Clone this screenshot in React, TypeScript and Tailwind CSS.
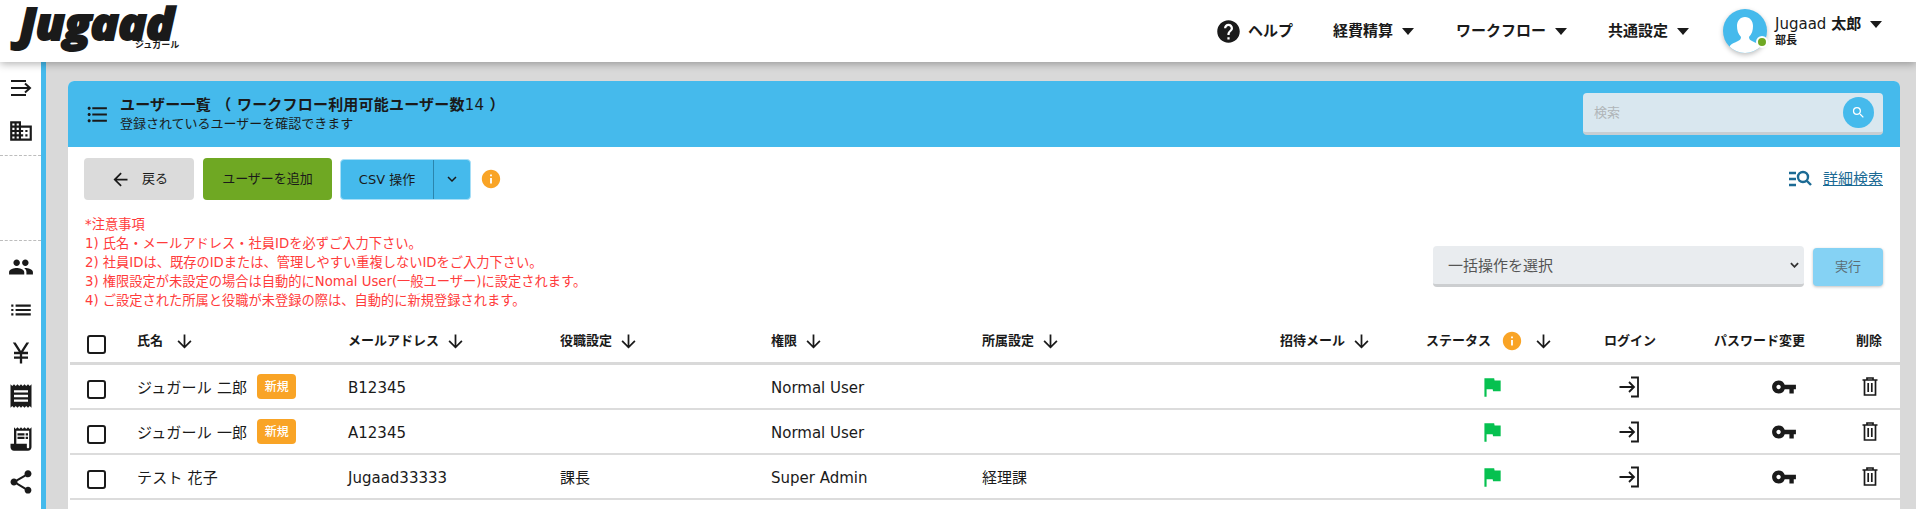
import {
  MdArrowBack,
  MdArrowDownward,
  MdCurrencyYen,
  MdDomain,
  MdFlag,
  MdFormatListBulleted,
  MdHelp,
  MdInfo,
  MdKeyboardArrowDown,
  MdList,
  MdPeople,
  MdReceipt,
  MdReceiptLong,
  MdSearch,
  MdShare,
  MdVpnKey,
} from 'react-icons/md';

const gridCols = 'grid grid-cols-[67px_211px_212px_211px_211px_298px_146px_178px_110px_142px_44px]';

const users = [
  { name: 'ジュガール 二郎', isNew: true, mail: 'B12345', title: '', role: 'Normal User', dept: '' },
  { name: 'ジュガール 一郎', isNew: true, mail: 'A12345', title: '', role: 'Normal User', dept: '' },
  { name: 'テスト 花子', isNew: false, mail: 'Jugaad33333', title: '課長', role: 'Super Admin', dept: '経理課' },
];

const notes = [
  '*注意事項',
  '1) 氏名・メールアドレス・社員IDを必ずご入力下さい。',
  '2) 社員IDは、既存のIDまたは、管理しやすい重複しないIDをご入力下さい。',
  '3) 権限設定が未設定の場合は自動的にNomal User(一般ユーザー)に設定されます。',
  '4) ご設定された所属と役職が未登録の際は、自動的に新規登録されます。',
];

function Caret() {
  return <span className="ml-[9px] w-0 h-0 border-x-[6px] border-x-transparent border-t-[7px] border-t-[#1a1a1a]" />;
}

function NavItem({ label, className }: { label: string; className: string }) {
  return (
    <div className={`flex items-center text-[15px] font-bold text-[#1a1a1a] ${className}`}>
      <span>{label}</span>
      <Caret />
    </div>
  );
}

function Avatar() {
  return (
    <div className="relative w-[44px] h-[44px] rounded-full bg-[#45baec] shadow-[0_2px_5px_rgba(0,0,0,0.25)]">
      <svg viewBox="0 0 44 44" className="w-full h-full rounded-full">
        <path
          fill="#fff"
          d="M22 8c-5 0-8 4-8 9 0 4 1 8 4 11 0 2-1 3-3 4-4 2-8 3-9 7 4 4 11 6 16 6s12-2 16-6c-1-4-5-5-9-7-2-1-3-2-3-4 3-3 4-7 4-11 0-5-3-9-8-9z"
        />
      </svg>
      <span className="absolute right-[-1px] bottom-[5px] w-[12px] h-[12px] rounded-full bg-[#6fa823] border-2 border-white" />
    </div>
  );
}

function SortHeader({ label, gap = 'ml-[6px]' }: { label: string; gap?: string }) {
  return (
    <div className="flex items-center text-[13px] font-bold text-[#1a1a1a]">
      <span>{label}</span>
      <MdArrowDownward className={`${gap} text-[21px]`} />
    </div>
  );
}

function Checkbox() {
  return <span className="ml-[17px] mt-[6px] block w-[19px] h-[19px] rounded-[3px] border-2 border-[#1a1a1a] bg-white" />;
}

function LoginIcon() {
  return (
    <svg viewBox="0 0 24 24" className="w-[24px] h-[24px]" fill="none" stroke="#1a1a1a" strokeWidth="1.8">
      <path d="M13 2.5h7v19h-7" />
      <path d="M1.5 12h14M11 7l5 5-5 5" />
    </svg>
  );
}

function TrashIcon() {
  return (
    <svg viewBox="0 0 16 19" className="w-[16px] h-[19px]" fill="none" stroke="#1a1a1a" strokeWidth="1.7">
      <path d="M0.5 3h15M5 3V1h6v2" />
      <path d="M2.5 3v15h11V3" />
      <path d="M6.2 6v9M9.8 6v9" />
    </svg>
  );
}

function SideIcon({ children }: { children: React.ReactNode }) {
  return <div className="h-[43px] flex items-center justify-center text-[26px] text-[#1a1a1a]">{children}</div>;
}

export default function App() {
  return (
    <div className="w-[1916px] h-[509px] overflow-hidden flex flex-col bg-[#d9d9d9] font-['DejaVu_Sans','Noto_Sans_CJK_JP',sans-serif] text-[#1a1a1a]">
      <header className="relative z-10 h-[62px] shrink-0 bg-white flex items-center shadow-[0_2px_8px_rgba(0,0,0,0.3)]">
        <div className="relative ml-[19px] w-[164px] h-[62px]">
          <span className="block origin-left scale-x-[1.06] pt-[5px] font-['Open_Sans',sans-serif] italic font-extrabold text-[44px] leading-[36px] tracking-[-0.5px] text-[#1a1a1a] [-webkit-text-stroke:2px_#1a1a1a]">
            Jugaad
          </span>
          <span className="absolute left-[116px] top-[40px] text-[9px] font-bold leading-[10px] font-['Noto_Sans_CJK_JP',sans-serif]">ジュガール</span>
        </div>
        <div className="ml-auto flex items-center">
          <MdHelp className="text-[27px] mr-[6px]" />
          <span className="text-[15px] font-bold mr-[40px]">ヘルプ</span>
          <NavItem label="経費精算" className="mr-[42px]" />
          <NavItem label="ワークフロー" className="mr-[41px]" />
          <NavItem label="共通設定" className="mr-[34px]" />
          <Avatar />
          <div className="ml-[8px] mr-[33px] w-[108px] flex flex-col">
            <div className="flex items-center text-[15px] leading-[20px]">
              <span>Jugaad <b>太郎</b></span>
              <Caret />
            </div>
            <span className="text-[11px] font-bold leading-[14px]">部長</span>
          </div>
        </div>
      </header>

      <div className="flex-1 flex min-h-0">
        <aside className="w-[46px] shrink-0 bg-white border-r-[5px] border-r-[#45baec] pt-[4px]">
          <SideIcon>
            <svg viewBox="0 0 24 24" className="w-[24px] h-[24px]" fill="none" stroke="#1a1a1a" strokeWidth="2">
              <path d="M2 5h15M2 12h19M2 19h15M16 7.5l5 4.5-5 4.5" />
            </svg>
          </SideIcon>
          <SideIcon>
            <MdDomain />
          </SideIcon>
          <div className="mt-[3px] border-t border-dashed border-[#bdbdbd]" />
          <div className="h-[84px]" />
          <div className="border-t border-dashed border-[#bdbdbd] mb-[4px]" />
          <SideIcon>
            <MdPeople />
          </SideIcon>
          <SideIcon>
            <MdList />
          </SideIcon>
          <SideIcon>
            <MdCurrencyYen className="text-[28px]" />
          </SideIcon>
          <SideIcon>
            <MdReceipt className="text-[28px]" />
          </SideIcon>
          <SideIcon>
            <MdReceiptLong className="text-[28px]" />
          </SideIcon>
          <SideIcon>
            <MdShare className="text-[28px]" />
          </SideIcon>
        </aside>

        <main className="flex-1 pt-[19px] pl-[22px] pr-[16px]">
          <div className="w-[1832px] h-[500px] rounded-t-[6px] bg-white">
            <div className="h-[66px] rounded-t-[6px] bg-[#45baec] flex items-center pl-[17px] pr-[17px]">
              <MdFormatListBulleted className="text-[25px] mr-[10px]" />
              <div>
                <div className="text-[15px] font-bold leading-[20px] tracking-[0.2px]">
                  ユーザー一覧 （ ワークフロー利用可能ユーザー数<span className="font-normal">14</span> ）
                </div>
                <div className="text-[13px] leading-[18px]">登録されているユーザーを確認できます</div>
              </div>
              <div className="ml-auto w-[300px] h-[42px] rounded-[4px] bg-[#d9e7ef] border-b-[3px] border-b-[#c7ced3] flex items-center pl-[11px] pr-[9px]">
                <span className="text-[13px] text-[#b0b5b8]">検索</span>
                <span className="ml-auto w-[31px] h-[31px] rounded-full bg-[#45baec] flex items-center justify-center">
                  <MdSearch className="text-[15px] text-white" />
                </span>
              </div>
            </div>

            <div className="flex items-center pl-[16px] pr-[17px] pt-[11px]">
              <button className="w-[110px] h-[42px] rounded-[4px] bg-[#dbdbdb] flex items-center justify-center text-[13px]">
                <MdArrowBack className="text-[21px] mr-[11px]" />
                戻る
              </button>
              <button className="ml-[9px] w-[129px] h-[42px] rounded-[4px] bg-[#6fa823] text-[13px]">ユーザーを追加</button>
              <div className="ml-[8px] w-[131px] h-[41px] rounded-[4px] bg-[#45baec] flex items-center text-[13px] border border-[#a8dff7]">
                <span className="w-[93px] text-center border-r border-r-[#2b85ad] leading-[39px]">CSV 操作</span>
                <span className="flex-1 flex justify-center">
                  <MdKeyboardArrowDown className="text-[18px]" />
                </span>
              </div>
              <MdInfo className="ml-[9px] text-[22px] text-[#f9a426]" />
              <div className="ml-auto flex items-center text-[15px] text-[#1b6a94]">
                <svg viewBox="0 0 24 24" className="w-[24px] h-[24px] mr-[11px]" fill="none" stroke="#1b6a94" strokeWidth="2.4">
                  <path d="M1 6h7M1 12h7M1 18h7" />
                  <circle cx="15" cy="10" r="5" />
                  <path d="M19 14l4 4" />
                </svg>
                <span className="underline">詳細検索</span>
              </div>
            </div>

            <div className="flex pl-[17px] pr-[17px] pt-[15px]">
              <div className="text-[13.25px] leading-[19px] text-[#ff3b3b]">
                {notes.map((n) => (
                  <div key={n}>{n}</div>
                ))}
              </div>
              <div className="ml-auto flex pt-[31px] h-[72px]">
                <div className="w-[371px] h-[41px] rounded-[4px] bg-[#e9ecef] border-b-[3px] border-b-[#ccced0] flex items-center pl-[15px] pr-[5px] text-[15px] text-[#555]">
                  <span className="pt-[3px]">一括操作を選択</span>
                  <svg viewBox="0 0 10 6" className="ml-auto w-[9px] h-[6px]" fill="none" stroke="#333" strokeWidth="2">
                    <path d="M1 1l4 4 4-4" />
                  </svg>
                </div>
                <div className="ml-[9px] mt-[2px] w-[70px] h-[38px] rounded-[4px] bg-[#85d2f4] flex items-center justify-center text-[13px] text-[#5b6d75] shadow-[0_1px_3px_rgba(0,0,0,0.25)]">
                  実行
                </div>
              </div>
            </div>

            <div className="ml-[2px] mt-[10px]">
              <div className={`${gridCols} h-[45px] items-center border-b-[3px] border-b-[#d9d9d9]`}>
                <Checkbox />
                <SortHeader label="氏名" gap="ml-[11px]" />
                <SortHeader label="メールアドレス" />
                <SortHeader label="役職設定" />
                <SortHeader label="権限" />
                <SortHeader label="所属設定" />
                <SortHeader label="招待メール" />
                <div className="flex items-center text-[13px] font-bold">
                  <span>ステータス</span>
                  <MdInfo className="ml-[10px] text-[22px] text-[#f9a426]" />
                  <MdArrowDownward className="ml-[10px] text-[21px]" />
                </div>
                <div className="text-[13px] font-bold">ログイン</div>
                <div className="text-[13px] font-bold">パスワード変更</div>
                <div className="text-[13px] font-bold">削除</div>
              </div>
              {users.map((u) => (
                <div key={u.name} className={`${gridCols} h-[45px] items-center border-b-2 border-b-[#dcdcdc] text-[15px]`}>
                  <Checkbox />
                  <div className="flex items-center">
                    <span className="pt-[4px] tracking-[0.2px]">{u.name}</span>
                    {u.isNew && (
                      <span className="ml-[10px] w-[39px] h-[25px] rounded-[4px] bg-[#f9a426] text-white text-[12px] font-medium flex items-center justify-center">
                        新規
                      </span>
                    )}
                  </div>
                  <div className="pt-[4px]">{u.mail}</div>
                  <div className="pt-[4px]">{u.title}</div>
                  <div className="pt-[4px]">{u.role}</div>
                  <div className="pt-[4px]">{u.dept}</div>
                  <div />
                  <div className="pl-[53px]">
                    <MdFlag className="text-[26px] text-[#06c150]" />
                  </div>
                  <div className="pl-[14px]">
                    <LoginIcon />
                  </div>
                  <div className="pl-[57px]">
                    <MdVpnKey className="text-[26px]" />
                  </div>
                  <div className="pl-[6px]">
                    <TrashIcon />
                  </div>
                </div>
              ))}
            </div>
          </div>
        </main>
      </div>
    </div>
  );
}
